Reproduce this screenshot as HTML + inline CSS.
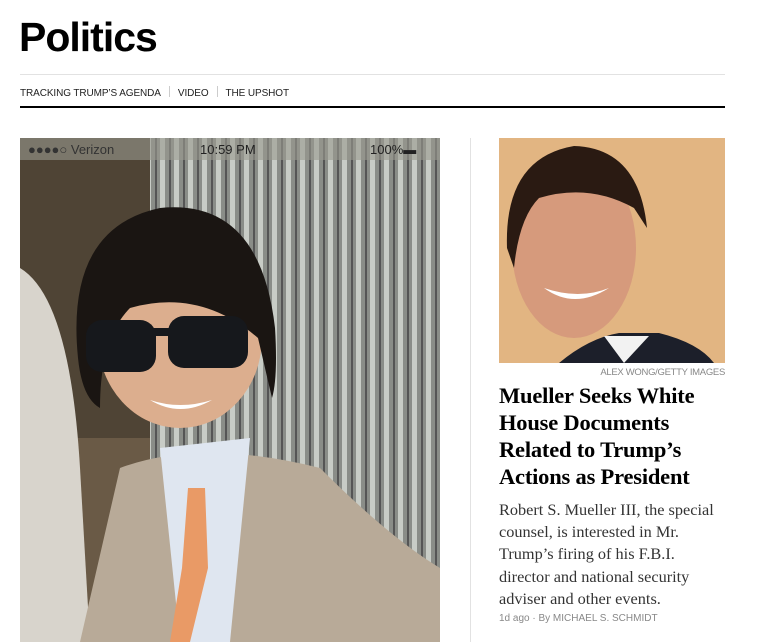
<!DOCTYPE html>
<html><head><meta charset="utf-8"><style>
body{margin:0;background:#fff;width:760px;height:642px;overflow:hidden;position:relative;font-family:"Liberation Sans",sans-serif}
.a{position:absolute}
h1{position:absolute;left:19px;top:14px;margin:0;font-size:41px;font-weight:bold;letter-spacing:-1px;color:#000}
.nav{left:20px;top:86px;font-size:10px;letter-spacing:-0.1px;color:#222;white-space:nowrap}
.nav span.s{display:inline-block;width:1px;height:11px;background:#ccc;margin:0 8px;vertical-align:-1px}
.hl{left:499px;top:382px;width:230px;font-family:"Liberation Serif",serif;font-weight:bold;font-size:22.5px;line-height:27px;color:#000;letter-spacing:-0.2px}
.sum{left:499px;top:499px;width:226px;font-family:"Liberation Serif",serif;font-size:16.3px;line-height:22.2px;color:#333}
</style></head><body>
<h1>Politics</h1>
<div class="a" style="left:20px;top:74px;width:705px;height:1px;background:#e2e2e2"></div>
<div class="a nav">TRACKING TRUMP’S AGENDA<span class="s"></span>VIDEO<span class="s"></span>THE UPSHOT</div>
<div class="a" style="left:20px;top:106px;width:705px;height:2px;background:#000"></div>
<svg class="a" style="left:20px;top:138px" width="420" height="504">
<defs><pattern id="st" width="14" height="10" patternUnits="userSpaceOnUse"><rect width="14" height="10" fill="#8a8d88"/><rect width="5" height="10" fill="#c8ccc6"/><rect x="9" width="2" height="10" fill="#555"/></pattern></defs>
<rect width="420" height="504" fill="#6a5a46"/>
<rect x="0" y="0" width="140" height="300" fill="#4f4435"/>
<rect x="130" y="0" width="290" height="504" fill="url(#st)"/>
<rect x="0" y="0" width="420" height="22" fill="#9a9a90" opacity=".6"/>
<text x="8" y="16" font-size="13" fill="#333" font-family="Liberation Sans">●●●●○ Verizon</text>
<text x="180" y="16" font-size="13" fill="#222" font-family="Liberation Sans">10:59 PM</text>
<text x="350" y="16" font-size="13" fill="#222" font-family="Liberation Sans">100%▬</text>
<path d="M0 130 Q50 160 60 330 L70 504 L0 504Z" fill="#d8d4cc"/>
<path d="M60 504 L100 330 Q180 300 300 330 Q370 400 420 430 L420 504Z" fill="#b8aa98"/>
<path d="M140 310 L160 504 L210 504 L230 300Z" fill="#dfe6f0"/>
<path d="M168 350 L185 350 L188 430 L170 504 L150 504 L162 430Z" fill="#e99a66"/>
<ellipse cx="160" cy="200" rx="82" ry="90" fill="#dcae8e"/>
<path d="M58 220 Q45 90 140 70 Q240 60 255 190 Q258 240 252 260 L238 200 Q180 150 110 170 Q80 200 80 270 Q62 260 58 220Z" fill="#1a1512"/>
<rect x="66" y="182" width="70" height="52" rx="16" fill="#16181c"/>
<rect x="148" y="178" width="80" height="52" rx="16" fill="#16181c"/>
<rect x="130" y="190" width="22" height="8" fill="#16181c"/>
<path d="M130 262 Q160 280 192 262 Q160 272 130 262Z" fill="#fff"/>
</svg>
<div class="a" style="left:470px;top:138px;width:1px;height:504px;background:#e2e2e2"></div>
<svg class="a" style="left:499px;top:138px" width="226" height="225">
<rect width="226" height="225" fill="#e2b582"/>
<path d="M60 225 Q90 200 120 195 L160 195 Q200 205 215 225Z" fill="#1c1f2a"/>
<path d="M105 198 L125 225 L150 198Z" fill="#f2f2f2"/>
<ellipse cx="75" cy="110" rx="62" ry="90" fill="#d69a7c"/>
<path d="M8 110 Q5 20 75 8 Q140 10 148 90 L135 70 Q90 45 40 60 Q20 80 15 130Z" fill="#2a1a12"/>
<path d="M45 150 Q75 172 110 150 Q80 162 45 150Z" fill="#fff"/>
</svg>
<div class="a" style="right:35px;top:367px;font-size:9.5px;letter-spacing:-0.3px;color:#888">ALEX WONG/GETTY IMAGES</div>
<div class="a hl">Mueller Seeks White House Documents Related to Trump’s Actions as President</div>
<div class="a sum">Robert S. Mueller III, the special counsel, is interested in Mr. Trump’s firing of his F.B.I. director and national security adviser and other events.</div>
<div class="a" style="left:499px;top:613px;font-size:10px;color:#888">1d ago · By MICHAEL S. SCHMIDT</div>
</body></html>
